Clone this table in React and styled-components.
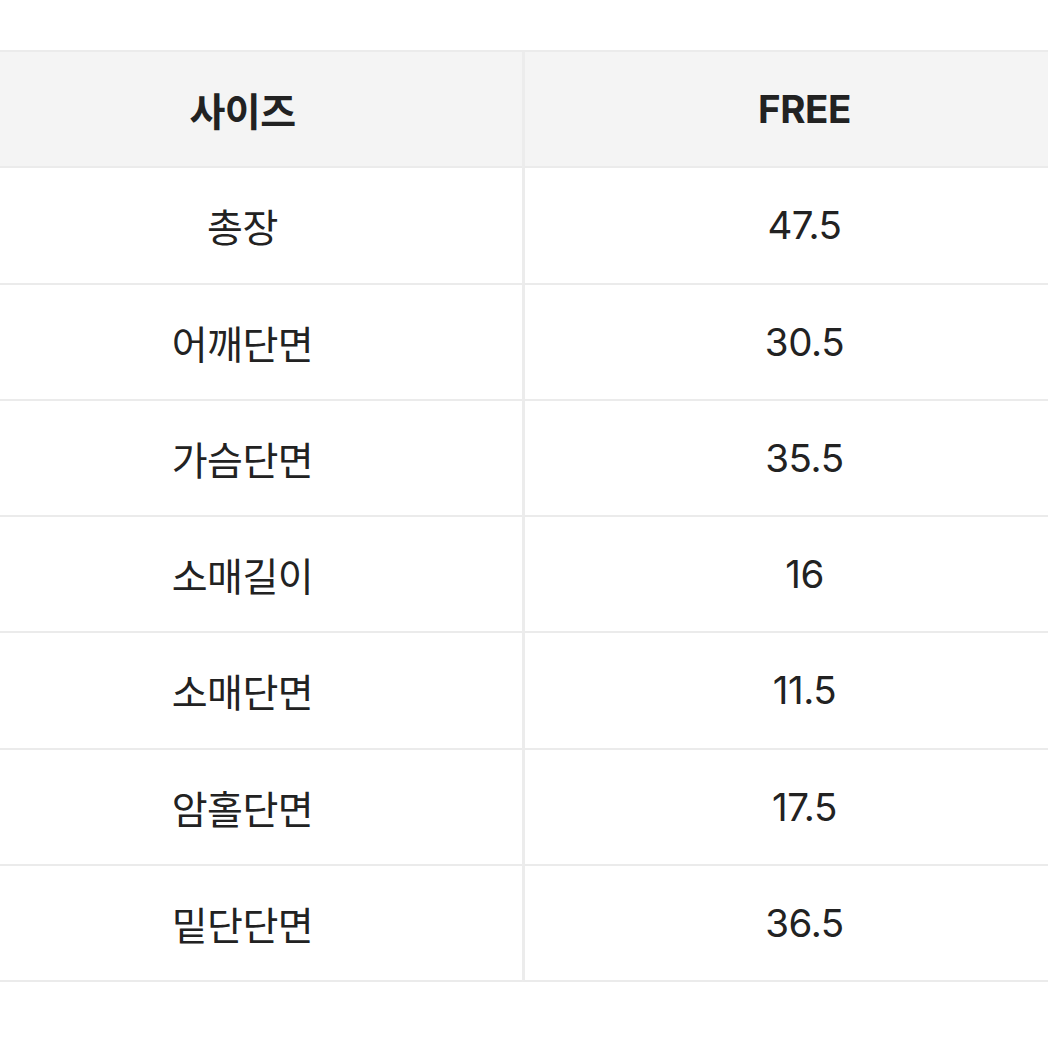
import { createGlobalStyle, styled } from "styled-components";

const GlobalStyle = createGlobalStyle`
  html, body {
    margin: 0;
    padding: 0;
    background: #ffffff;
    overflow: hidden;
  }
  body {
    font-family: Inter, "Noto Sans CJK KR", sans-serif;
    color: #222222;
  }
`;

const Page = styled.div`
  width: 1048px;
  height: 1048px;
  overflow: hidden;
  padding-top: 50px;
  box-sizing: border-box;
`;

const Table = styled.div`
  display: grid;
  grid-template-columns: 559px 562px;
  width: 1123px;
  margin-left: -37px;
  border-top: 2px solid #ebebeb;
`;

const Cell = styled.div`
  height: 114.25px;
  display: flex;
  align-items: center;
  justify-content: center;
  border-bottom: 2px solid #ebebeb;
  border-left: ${(p) => (p.$right ? "3px solid #ececec" : "none")};
  background: ${(p) => (p.$head ? "#f4f4f4" : "#ffffff")};
  font-family: ${(p) =>
    p.$right ? 'Inter, "Noto Sans CJK KR", sans-serif' : '"Noto Sans CJK KR", Inter, sans-serif'};
  font-size: ${(p) => (p.$right ? "38.5px" : "39px")};
  font-weight: ${(p) => (p.$head ? 700 : 400)};
  letter-spacing: ${(p) => (p.$right ? "-0.4px" : "-0.5px")};
`;

const rows = [
  ["총장", "47.5"],
  ["어깨단면", "30.5"],
  ["가슴단면", "35.5"],
  ["소매길이", "16"],
  ["소매단면", "11.5"],
  ["암홀단면", "17.5"],
  ["밑단단면", "36.5"],
];

function App() {
  return (
    <Page>
      <GlobalStyle />
      <Table>
        <Cell $head>사이즈</Cell>
        <Cell $head $right>FREE</Cell>
        {rows.map(([label, value]) => [
          <Cell key={label}>{label}</Cell>,
          <Cell key={label + "-v"} $right>
            {value}
          </Cell>,
        ])}
      </Table>
    </Page>
  );
}

export default App;
